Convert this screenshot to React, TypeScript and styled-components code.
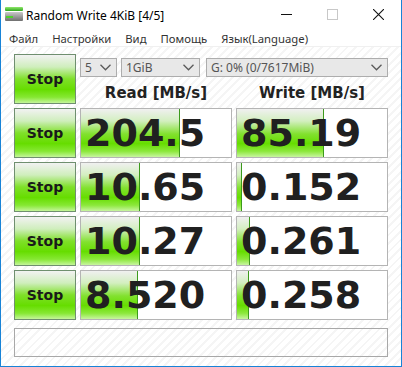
import React from 'react';
import styled, { createGlobalStyle } from 'styled-components';

const GlobalStyle = createGlobalStyle`
  html, body {
    margin: 0;
    padding: 0;
    background: #ffffff;
  }
  * {
    box-sizing: border-box;
  }
`;

type Row = { read: string; readPct: number; write: string; writePct: number };

const rows: Row[] = [
  { read: '204.5', readPct: 65.8, write: '85.19', writePct: 57.9 },
  { read: '10.65', readPct: 39.5, write: '0.152', writePct: 3.3 },
  { read: '10.27', readPct: 39.5, write: '0.261', writePct: 8.6 },
  { read: '8.520', readPct: 38.2, write: '0.258', writePct: 7.9 },
];

const menuItems = ['Файл', 'Настройки', 'Вид', 'Помощь', 'Язык(Language)'];

const AppIcon = () => (
  <svg width="20" height="16" viewBox="0 0 20 16">
    <defs>
      <linearGradient id="g1" x1="0" y1="0" x2="0" y2="1">
        <stop offset="0" stopColor="#8fe86a" />
        <stop offset="1" stopColor="#2fa51e" />
      </linearGradient>
      <linearGradient id="g2" x1="0" y1="0" x2="0" y2="1">
        <stop offset="0" stopColor="#c9c9c9" />
        <stop offset="1" stopColor="#6f6f6f" />
      </linearGradient>
    </defs>
    <rect x="1" y="1" width="18" height="4" rx="1" fill="url(#g1)" />
    <rect x="1" y="6" width="18" height="9" rx="1" fill="url(#g2)" />
    <rect x="2" y="10" width="7" height="2" fill="#4fd12e" />
  </svg>
);

const Chevron = () => (
  <svg width="11" height="7" viewBox="0 0 11 7">
    <path d="M0.5 0.8 L5.5 5.8 L10.5 0.8" fill="none" stroke="#5a5a5a" strokeWidth="1.3" />
  </svg>
);

const App = () => {
  return (
    <>
      <GlobalStyle />
      <S.Window>
        <S.TitleBar>
          <S.TitleLeft>
            <AppIcon />
            <S.TitleText>Random Write 4KiB [4/5]</S.TitleText>
          </S.TitleLeft>
          <S.Controls>
            <S.CtrlBtn>
              <svg width="11" height="11" viewBox="0 0 11 11">
                <line x1="0" y1="5.5" x2="11" y2="5.5" stroke="#111" strokeWidth="1" />
              </svg>
            </S.CtrlBtn>
            <S.CtrlBtn>
              <svg width="11" height="11" viewBox="0 0 11 11">
                <rect x="0.5" y="0.5" width="10" height="10" fill="none" stroke="#c8c8c8" strokeWidth="1" />
              </svg>
            </S.CtrlBtn>
            <S.CtrlBtn>
              <svg width="11" height="11" viewBox="0 0 11 11">
                <path d="M0 0 L11 11 M11 0 L0 11" stroke="#111" strokeWidth="1.1" />
              </svg>
            </S.CtrlBtn>
          </S.Controls>
        </S.TitleBar>
        <S.MenuBar>
          {menuItems.map((m) => (
            <S.MenuItem key={m}>{m}</S.MenuItem>
          ))}
        </S.MenuBar>
        <S.Client>
          <S.Grid>
            <S.StopBtn>Stop</S.StopBtn>
            <S.Setup>
              <S.Selects>
                <S.Select $w={37}>
                  <span>5</span>
                  <Chevron />
                </S.Select>
                <S.Select $w={79}>
                  <span>1GiB</span>
                  <Chevron />
                </S.Select>
                <S.Select $w={182} $ml={2}>
                  <span>G: 0% (0/7617MiB)</span>
                  <Chevron />
                </S.Select>
              </S.Selects>
              <S.Headers>
                <S.Header>Read [MB/s]</S.Header>
                <S.Header>Write [MB/s]</S.Header>
              </S.Headers>
            </S.Setup>
            {rows.map((r, i) => (
              <React.Fragment key={i}>
                <S.StopBtn>Stop</S.StopBtn>
                <S.ValueBox>
                  <S.Bar style={{ width: `${r.readPct}%` }} />
                  <S.Value>{r.read}</S.Value>
                </S.ValueBox>
                <S.ValueBox>
                  <S.Bar style={{ width: `${r.writePct}%` }} />
                  <S.Value>{r.write}</S.Value>
                </S.ValueBox>
              </React.Fragment>
            ))}
          </S.Grid>
          <S.Comment />
        </S.Client>
      </S.Window>
    </>
  );
};

export default App;

const S = {
  Window: styled.div`
    width: 402px;
    height: 367px;
    display: flex;
    flex-direction: column;
    border: 1px solid #1883d7;
    border-top: none;
    background: #ffffff;
    overflow: hidden;
  `,
  TitleBar: styled.div`
    height: 30px;
    display: flex;
    align-items: center;
    justify-content: space-between;
    padding-left: 3px;
  `,
  TitleLeft: styled.div`
    display: flex;
    align-items: center;
    gap: 2px;
    padding-bottom: 3px;
  `,
  TitleText: styled.span`
    font-family: 'Noto Sans', sans-serif;
    font-size: 12px;
    color: #000;
    padding-top: 3px;
  `,
  Controls: styled.div`
    display: flex;
    height: 100%;
  `,
  CtrlBtn: styled.div`
    width: 46px;
    height: 29px;
    display: flex;
    align-items: center;
    justify-content: center;
  `,
  MenuBar: styled.div`
    height: 17px;
    display: flex;
    align-items: center;
    padding-left: 1px;
    border-bottom: 1px solid #f0f0f0;
  `,
  MenuItem: styled.span`
    font-family: 'Noto Sans', sans-serif;
    font-size: 11.3px;
    color: #333;
    padding: 0 7px;
  `,
  Client: styled.div`
    flex: 1;
    padding: 7px 12px 0 13px;
    background: repeating-linear-gradient(
      135deg,
      #ffffff 0px,
      #ffffff 4px,
      #f5f5f5 4px,
      #f5f5f5 6px
    );
  `,
  Grid: styled.div`
    display: grid;
    grid-template-columns: 62px 152px 152px;
    grid-auto-rows: 50px;
    gap: 4px;
  `,
  StopBtn: styled.div`
    display: flex;
    align-items: center;
    justify-content: center;
    border: 1px solid #6f8f6f;
    background: linear-gradient(
      to bottom,
      #f2f2f2 0%,
      #cfeebc 25%,
      #7fe029 50%,
      #66dd00 72%,
      #86e833 88%,
      #c4f59a 100%
    );
    font-family: 'DejaVu Sans', Verdana, sans-serif;
    font-weight: bold;
    font-size: 14px;
    color: #1a1a1a;
    padding-bottom: 1px;
  `,
  Setup: styled.div`
    grid-column: 2 / span 2;
    display: flex;
    flex-direction: column;
  `,
  Selects: styled.div`
    display: flex;
    gap: 4px;
    margin-top: 4px;
  `,
  Select: styled.div<{ $w: number; $ml?: number }>`
    width: ${(p) => p.$w}px;
    margin-left: ${(p) => p.$ml ?? 0}px;
    height: 19px;
    display: flex;
    align-items: center;
    justify-content: space-between;
    padding: 0 5px 0 4px;
    border: 1px solid #adadad;
    background: #e8e8e8;
    font-family: 'Noto Sans', sans-serif;
    font-size: 12px;
    color: #555;
  `,
  Headers: styled.div`
    display: grid;
    grid-template-columns: 152px 152px;
    gap: 4px;
    margin-top: 6px;
  `,
  Header: styled.div`
    text-align: center;
    font-family: 'DejaVu Sans', Verdana, sans-serif;
    font-weight: bold;
    font-size: 15px;
    line-height: 20px;
    color: #222;
  `,
  ValueBox: styled.div`
    position: relative;
    display: flex;
    align-items: center;
    border: 1px solid #b4b4b4;
    background: #ffffff;
    overflow: hidden;
  `,
  Bar: styled.div`
    position: absolute;
    left: 0;
    top: 0;
    bottom: 0;
    border-right: 1px solid #3c9a1c;
    background: linear-gradient(
      to bottom,
      #f0f0f0 0%,
      #d3efc0 25%,
      #82e12f 52%,
      #66dd00 72%,
      #8ce83c 88%,
      #c8f5a0 100%
    );
  `,
  Value: styled.span`
    position: relative;
    padding-left: 4px;
    font-family: 'DejaVu Sans', Verdana, sans-serif;
    font-weight: bold;
    font-size: 38px;
    line-height: 1;
    color: #202020;
  `,
  Comment: styled.div`
    margin-top: 8px;
    width: 374px;
    height: 29px;
    border: 1px solid #a8a8a8;
    background: transparent;
  `,
};
